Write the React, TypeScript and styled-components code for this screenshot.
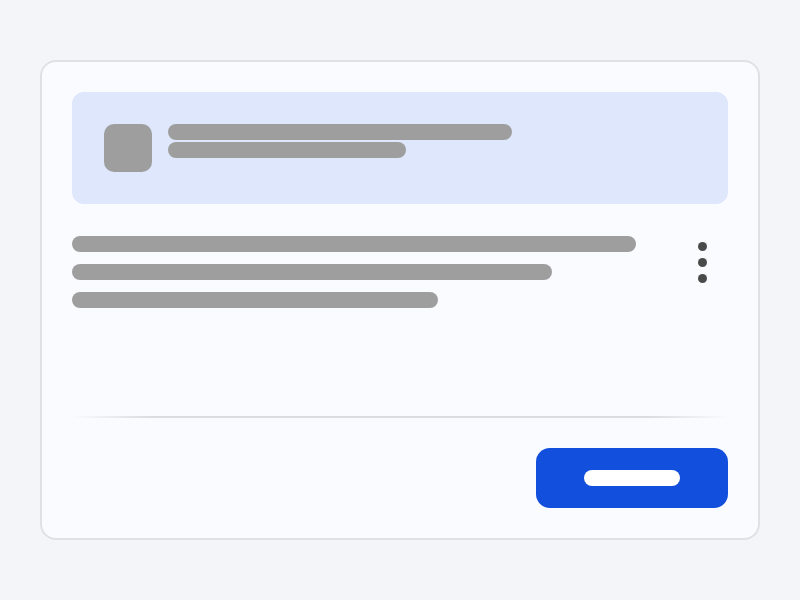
import styled, { createGlobalStyle } from 'styled-components';

const GlobalStyle = createGlobalStyle`
  html, body {
    margin: 0;
    padding: 0;
    background: #f4f5f9;
    font-family: 'Inter', 'Liberation Sans', sans-serif;
  }
`;

const Page = styled.div`
  width: 800px;
  height: 600px;
  padding: 60px 40px;
  box-sizing: border-box;
`;

const Card = styled.div`
  height: 480px;
  box-sizing: border-box;
  border: 2px solid #e0e1e6;
  border-radius: 16px;
  background: #f9fbff;
  padding: 30px;
  display: flex;
  flex-direction: column;
`;

const Header = styled.div`
  background: #dee7fb;
  border-radius: 12px;
  padding: 32px;
  display: flex;
  gap: 16px;
  align-items: flex-start;
`;

const Avatar = styled.div`
  width: 48px;
  height: 48px;
  border-radius: 10px;
  background: #9e9e9e;
  flex-shrink: 0;
`;

const Lines = styled.div<{ gap: number }>`
  display: flex;
  flex-direction: column;
  gap: ${(p) => p.gap}px;
`;

const Bar = styled.div<{ w: number }>`
  width: ${(p) => p.w}px;
  height: 16px;
  border-radius: 8px;
  background: #9e9e9e;
`;

const Body = styled.div`
  flex: 1;
  display: flex;
  justify-content: space-between;
  align-items: flex-start;
  padding-top: 32px;
`;

const Kebab = styled.button`
  width: 24px;
  margin: 6px 14px 0 0;
  padding: 0;
  border: none;
  background: transparent;
  display: flex;
  flex-direction: column;
  align-items: center;
  gap: 7px;
  cursor: pointer;
`;

const Dot = styled.span`
  width: 9px;
  height: 9px;
  border-radius: 50%;
  background: #4a4a4a;
`;

const Divider = styled.div`
  height: 2px;
  background: linear-gradient(to right, rgba(220, 220, 222, 0), #dcdcde 12%, #dcdcde 88%, rgba(220, 220, 222, 0));
  margin-bottom: 30px;
`;

const Footer = styled.div`
  display: flex;
  justify-content: flex-end;
`;

const PrimaryButton = styled.button`
  width: 192px;
  height: 60px;
  border: none;
  border-radius: 14px;
  background: #124fdd;
  display: flex;
  align-items: center;
  justify-content: center;
  cursor: pointer;
`;

const Label = styled.span`
  width: 96px;
  height: 16px;
  border-radius: 8px;
  background: #ffffff;
`;

export default function App() {
  return (
    <>
      <GlobalStyle />
      <Page>
        <Card>
          <Header>
            <Avatar />
            <Lines gap={2}>
              <Bar w={344} />
              <Bar w={238} />
            </Lines>
          </Header>
          <Body>
            <Lines gap={12}>
              <Bar w={564} />
              <Bar w={480} />
              <Bar w={366} />
            </Lines>
            <Kebab aria-label="More">
              <Dot />
              <Dot />
              <Dot />
            </Kebab>
          </Body>
          <Divider />
          <Footer>
            <PrimaryButton>
              <Label />
            </PrimaryButton>
          </Footer>
        </Card>
      </Page>
    </>
  );
}
